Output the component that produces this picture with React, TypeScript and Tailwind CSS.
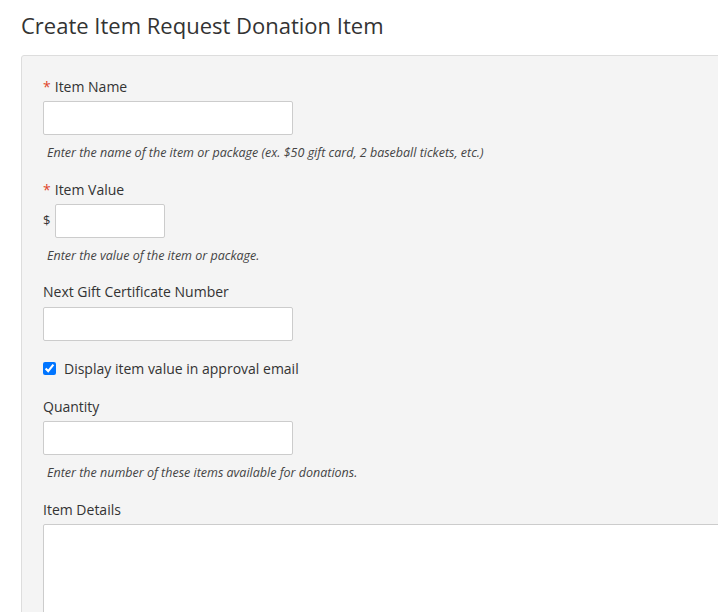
import { useState } from "react";

function Label({ text, required }: { text: string; required?: boolean }) {
  return (
    <label className="block h-5 text-[14px] leading-5 text-[#333]">
      {required && <span className="mr-[4px] text-[#e0452a]">*</span>}
      {text}
    </label>
  );
}

function Help({ text }: { text: string }) {
  return (
    <p className="mt-[10px] h-4 pl-1 text-[12.5px] leading-4 italic text-[#444]">
      {text}
    </p>
  );
}

const inputCls =
  "block h-[34px] rounded-[2px] border border-[#cccccc] bg-white px-2 text-[14px] outline-none";

export default function App() {
  const [showValue, setShowValue] = useState(true);

  return (
    <div
      className="min-h-[612px] overflow-hidden bg-white pl-[21px]"
      style={{ fontFamily: '"Open Sans", "Liberation Sans", sans-serif' }}
    >
      <h1 className="pt-[10px] text-[22px] leading-[30px] text-[#333]">
        Create Item Request Donation Item
      </h1>

      <form className="mt-[15px] w-[720px] rounded-tl-[3px] border border-[#dddddd] bg-[#f4f4f4] pb-10 pl-[21px] pt-[21px]">
        {/* Item Name */}
        <Label text="Item Name" required />
        <input className={`${inputCls} mt-1 w-[250px]`} />
        <Help text="Enter the name of the item or package (ex. $50 gift card, 2 baseball tickets, etc.)" />

        {/* Item Value */}
        <div className="mt-[19px]">
          <Label text="Item Value" required />
          <div className="mt-[4px] flex items-center">
            <span className="mr-[5px] text-[13px] text-[#333]">$</span>
            <input className={`${inputCls} w-[110px]`} />
          </div>
          <Help text="Enter the value of the item or package." />
        </div>

        {/* Gift certificate */}
        <div className="mt-[18px]">
          <Label text="Next Gift Certificate Number" />
          <input className={`${inputCls} mt-[5px] w-[250px]`} />
        </div>

        <label className="mt-[17px] flex h-5 items-center text-[14px] text-[#333]">
          <input
            type="checkbox"
            checked={showValue}
            onChange={(e) => setShowValue(e.target.checked)}
            className="m-0 h-[13px] w-[13px] accent-[#0075ff]"
          />
          <span className="ml-2">Display item value in approval email</span>
        </label>

        {/* Quantity */}
        <div className="mt-[19px]">
          <Label text="Quantity" />
          <input className={`${inputCls} mt-1 w-[250px]`} />
          <Help text="Enter the number of these items available for donations." />
        </div>

        {/* Details */}
        <div className="mt-[19px]">
          <Label text="Item Details" />
          <textarea className="mt-1 block h-[140px] w-[700px] resize-none rounded-[2px] border border-[#cccccc] bg-white outline-none" />
        </div>
      </form>
    </div>
  );
}
